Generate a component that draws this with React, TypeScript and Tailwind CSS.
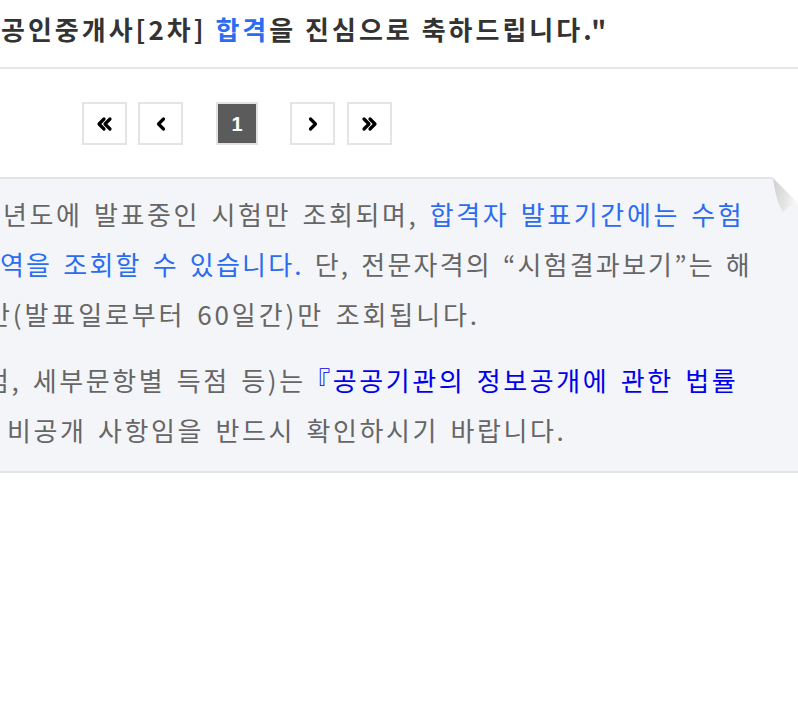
const font = { fontFamily: '"Noto Sans CJK KR", "Noto Sans", sans-serif' };

function PageButton({ children, active }: { children: React.ReactNode; active?: boolean }) {
  return (
    <div
      className={
        active
          ? "flex h-[43px] w-[42px] items-center justify-center border-2 border-[#e2e2e2] bg-[#5b5b5b] text-[20px] font-bold text-white"
          : "flex h-[43px] w-[45px] items-center justify-center border-2 border-[#e4e4e4] bg-white text-black"
      }
      style={active ? { fontFamily: '"Liberation Sans", Arial, sans-serif' } : undefined}
    >
      {children}
    </div>
  );
}

function Chevron({ dir, double }: { dir: "left" | "right"; double?: boolean }) {
  if (double) {
    const a = dir === "left" ? "M8 3 L3 8 L8 13" : "M3 3 L8 8 L3 13";
    const b = dir === "left" ? "M14 3 L9 8 L14 13" : "M9 3 L14 8 L9 13";
    return (
      <svg width="17" height="16" viewBox="0 0 17 16" fill="none">
        <path d={a} stroke="black" strokeWidth="3.2" strokeLinecap="round" strokeLinejoin="round" />
        <path d={b} stroke="black" strokeWidth="3.2" strokeLinecap="round" strokeLinejoin="round" />
      </svg>
    );
  }
  return (
    <svg width="12" height="16" viewBox="0 0 12 16" fill="none">
      <path
        d={dir === "left" ? "M8.5 3 L3.5 8 L8.5 13" : "M3.5 3 L8.5 8 L3.5 13"}
        stroke="black"
        strokeWidth="3.2"
        strokeLinecap="round"
        strokeLinejoin="round"
      />
    </svg>
  );
}

function PageCurl() {
  return (
    <svg className="absolute right-0 top-[-2px]" width="26" height="40" viewBox="0 0 26 40">
      <defs>
        <linearGradient id="curl" x1="0" y1="0" x2="1" y2="0.3">
          <stop offset="0" stopColor="#cfcfcf" />
          <stop offset="0.6" stopColor="#e4e4e4" />
          <stop offset="1" stopColor="#f6f6f6" />
        </linearGradient>
      </defs>
      <path d="M0 0 L26 0 L26 28 Z" fill="white" />
      <path d="M1 1 C3 14 5 26 11 35 C15 31 20 28 26 26 Z" fill="url(#curl)" />
    </svg>
  );
}

export default function App() {
  return (
    <div className="h-[714px] w-[798px] overflow-hidden bg-white" style={font}>
      <div className="flex h-[69px] items-center border-b-2 border-[#e6e6e6] pb-[10px]">
        <h1 className="ml-[1px] whitespace-nowrap text-[26px] font-bold tracking-[3px] text-[#333]">
          공인중개사[2차] <span className="text-[#2b6cf0]">합격</span>을 진심으로 축하드립니다."
        </h1>
      </div>

      <div className="ml-[82px] mt-[33px] flex items-center">
        <PageButton>
          <Chevron dir="left" double />
        </PageButton>
        <div className="ml-[11px]">
          <PageButton>
            <Chevron dir="left" />
          </PageButton>
        </div>
        <div className="ml-[33px]">
          <PageButton active>1</PageButton>
        </div>
        <div className="ml-[32px]">
          <PageButton>
            <Chevron dir="right" />
          </PageButton>
        </div>
        <div className="ml-[12px]">
          <PageButton>
            <Chevron dir="right" double />
          </PageButton>
        </div>
      </div>

      <div
        className="relative mt-[32px] whitespace-nowrap border-y-2 border-[#e4e4e6] bg-[#f4f5f9] pb-[16px] pt-[10px] text-[26px] leading-[50px] tracking-[2.6px] text-[#666]"
        style={{ wordSpacing: "3px" }}
      >
        <PageCurl />
        <div className="ml-[3px]">
          년도에 발표중인 시험만 조회되며, <span className="text-[#2b6cf0]">합격자 발표기간에는 수험</span>
        </div>
        <div className="ml-[0px] tracking-[2.2px]">
          <span className="text-[#2b6cf0]">역을 조회할 수 있습니다.</span> 단, 전문자격의 “시험결과보기”는 해
        </div>
        <div className="ml-[-14px] tracking-[2.9px]">간(발표일로부터 60일간)만 조회됩니다.</div>
        <div className="ml-[-15px] mt-[16px]">
          점, 세부문항별 득점 등)는 <span className="ml-[-13px] text-[#0000ee]">『공공기관의 정보공개에 관한 법률</span>
        </div>
        <div className="ml-[7px]">비공개 사항임을 반드시 확인하시기 바랍니다.</div>
      </div>
    </div>
  );
}
